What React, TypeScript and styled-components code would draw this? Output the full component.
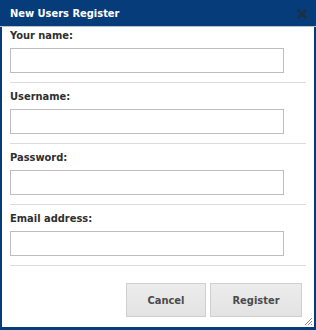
import React from "react";
import styled, { createGlobalStyle } from "styled-components";

const GlobalStyle = createGlobalStyle`
  html, body {
    margin: 0;
    padding: 0;
    background: #fff;
  }
  * {
    box-sizing: border-box;
  }
`;

const fields = ["Your name:", "Username:", "Password:", "Email address:"];

export default function App() {
  return (
    <>
      <GlobalStyle />
      <Dialog>
        <TitleBar>
          <Title>New Users Register</Title>
          <CloseButton aria-label="close">
            <svg width="10" height="10" viewBox="0 0 10 10">
              <path d="M1.5 1.5 L8.5 8.5 M8.5 1.5 L1.5 8.5" stroke="#1e2f45" strokeWidth="2.6" strokeLinecap="square" />
            </svg>
          </CloseButton>
        </TitleBar>
        <Body>
          {fields.map((label, i) => (
            <Field key={label} $first={i === 0}>
              <Label>{label}</Label>
              <Input type={label === "Password:" ? "password" : "text"} />
            </Field>
          ))}
          <Footer>
            <Button>Cancel</Button>
            <Button $wide>Register</Button>
          </Footer>
        </Body>
        <Grip width="9" height="9" viewBox="0 0 9 9">
          <path d="M8 1 L1 8 M8 4 L4 8 M8 7 L7 8" stroke="#8a8a8a" strokeWidth="1" />
        </Grip>
      </Dialog>
    </>
  );
}

const Dialog = styled.div`
  position: relative;
  width: 316px;
  height: 330px;
  display: flex;
  flex-direction: column;
  background: #fff;
  border: 2px solid #063c7a;
  border-top: none;
  border-bottom-width: 3px;
  font-family: "DejaVu Sans Condensed", "DejaVu Sans", Verdana, sans-serif;
`;

const TitleBar = styled.div`
  height: 27px;
  display: flex;
  align-items: center;
  justify-content: space-between;
  padding: 1px 8px 0 8px;
  margin: 0 -2px;
  background: #063c7a;
  border-bottom: 1px solid #b9c3cf;
`;

const Title = styled.div`
  color: #fff;
  font-size: 11px;
  font-weight: bold;
  padding-left: 2px;
`;

const CloseButton = styled.button`
  border: none;
  background: transparent;
  padding: 0;
  display: flex;
  margin-right: 1px;
  cursor: pointer;
`;

const Body = styled.div`
  flex: 1;
  display: flex;
  flex-direction: column;
  padding: 0 8px 0 8px;
`;

const Field = styled.div<{ $first: boolean }>`
  display: flex;
  flex-direction: column;
  align-items: flex-start;
  padding: ${({ $first }) => ($first ? "2px" : "7px")} 0 9px 0;
  border-bottom: 1px solid #dcdcdc;
`;

const Label = styled.label`
  height: 14px;
  line-height: 14px;
  margin-bottom: 5px;
  font-size: 11px;
  font-weight: bold;
  color: #2f2f2f;
`;

const Input = styled.input`
  width: 274px;
  height: 25px;
  margin: 0;
  border: 1px solid #bdbdbd;
  background: #fff;
  outline: none;
  font-family: inherit;
  font-size: 11px;
`;

const Footer = styled.div`
  display: flex;
  justify-content: flex-end;
  gap: 4px;
  padding: 17px 4px 0 0;
`;

const Button = styled.button<{ $wide?: boolean }>`
  width: ${({ $wide }) => ($wide ? "92px" : "80px")};
  height: 34px;
  border: 1px solid #cfcfcf;
  background: linear-gradient(#ececec, #e3e3e3);
  color: #4b4b4b;
  font-family: inherit;
  font-size: 11px;
  font-weight: bold;
  cursor: pointer;
`;

const Grip = styled.svg`
  position: absolute;
  right: 1px;
  bottom: 1px;
`;
